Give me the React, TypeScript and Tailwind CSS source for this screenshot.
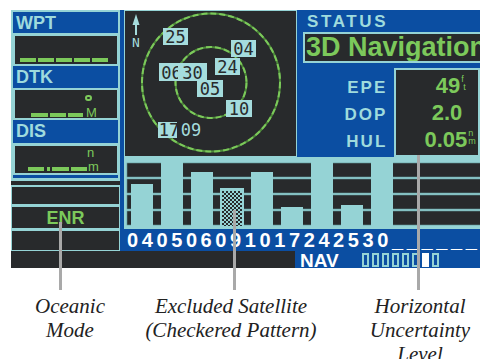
import React from "react";

const TEAL = "#95d3d5";
const DARK = "#282a2c";
const GREEN = "#7cc95b";
const CYAN = "#a5dcdd";

const sans = "font-['Liberation_Sans',Arial,sans-serif] font-bold";

function Header({ label, h }: { label: string; h: string }) {
  return (
    <div className={`${h} mx-[2px] bg-[#0b4ea2] pl-[3px] pt-[2px] text-[18px] leading-none text-[#9fdbdd] ${sans}`}>
      {label}
    </div>
  );
}

function Dash({ w }: { w: string }) {
  return <div className={`${w} h-[4px] bg-[#7cc95b]`} />;
}

function SkyMap() {
  const sats = [
    { x: 39, y: 18, w: 25, h: 17, t: "25" },
    { x: 107, y: 30, w: 25, h: 17, t: "04" },
    { x: 91, y: 48, w: 25, h: 17, t: "24" },
    { x: 35, y: 53, w: 25, h: 18, t: "06" },
    { x: 54, y: 53, w: 29, h: 18, t: "30" },
    { x: 73, y: 70, w: 26, h: 17, t: "05" },
    { x: 102, y: 90, w: 26, h: 17, t: "10" },
    { x: 34, y: 112, w: 22, h: 16, t: "17" },
  ];
  return (
    <svg width="173" height="147" viewBox="0 0 173 147" className="block">
      <rect x="0.5" y="0.5" width="172" height="146" fill={DARK} stroke={TEAL} />
      <circle cx="87" cy="72.5" r="69" fill="none" stroke="#4e8a3a" strokeWidth="2" />
      <circle cx="87" cy="72.5" r="69" fill="none" stroke={GREEN} strokeWidth="2" strokeDasharray="6 3" />
      <circle cx="87" cy="72.5" r="35.5" fill="none" stroke="#4e8a3a" strokeWidth="2" />
      <circle cx="87" cy="72.5" r="35.5" fill="none" stroke={GREEN} strokeWidth="2" strokeDasharray="6 3" />
      {/* north arrow */}
      <path d="M12 4 L8.5 15 H15.5 Z" fill={CYAN} />
      <rect x="11" y="14" width="2" height="11" fill={CYAN} />
      <text x="12" y="37" fontSize="13" textAnchor="middle" fill={CYAN} fontFamily="DejaVu Sans Mono, monospace">
        N
      </text>
      {sats.map((s) => (
        <g key={s.t}>
          <rect x={s.x} y={s.y} width={s.w} height={s.h} fill={CYAN} />
          <text
            x={s.x + s.w / 2}
            y={s.y + s.h - 2.5}
            fontSize="17"
            textAnchor="middle"
            fill={DARK}
            fontFamily="DejaVu Sans Mono, monospace"
          >
            {s.t}
          </text>
        </g>
      ))}
      <rect x="53" y="112" width="28" height="16" fill={DARK} />
      <text x="67" y="126" fontSize="17" textAnchor="middle" fill={CYAN} fontFamily="DejaVu Sans Mono, monospace">
        09
      </text>
    </svg>
  );
}

const bars = [
  { top: 27 },
  { top: 0 },
  { top: 15 },
  { top: 31, excluded: true },
  { top: 15 },
  { top: 50 },
  { top: 0 },
  { top: 48 },
  { top: 0 },
];

function SignalChart() {
  return (
    <svg width="356" height="72" viewBox="0 0 356 72" className="block">
      <defs>
        <pattern id="chk" width="4" height="4" patternUnits="userSpaceOnUse">
          <rect width="4" height="4" fill={TEAL} />
          <rect width="2" height="2" fill={DARK} />
          <rect x="2" y="2" width="2" height="2" fill={DARK} />
        </pattern>
      </defs>
      <rect width="356" height="72" fill={TEAL} />
      {[6, 22, 38, 54].map((y) => (
        <rect key={y} x="3" y={y} width="360" height="14" fill={DARK} stroke="#5f9597" strokeWidth="0.6" />
      ))}
      {bars.map((b, i) => {
        const x = 7 + i * 30;
        if (b.excluded) {
          return (
            <g key={i}>
              <rect x={x - 1} y={b.top} width="24" height={72 - b.top} fill={TEAL} />
              <rect x={x + 1} y={b.top + 3} width="20" height="35" fill="url(#chk)" />
            </g>
          );
        }
        return <rect key={i} x={x} y={b.top} width="22" height={72 - b.top} fill={TEAL} />;
      })}
    </svg>
  );
}

export default function App() {
  return (
    <div className="relative w-[480px] h-[359px] overflow-hidden bg-white pt-[10px] pl-[11px]">
      {/* unit screen */}
      <div className="w-[469px] h-[258px] flex flex-col overflow-hidden bg-[#0b4ea2]">
        <div className="h-[241px] flex">
          {/* left column */}
          <div className="w-[109px] flex flex-col bg-[#95d3d5] pt-[2px]">
            <Header label="WPT" h="h-[21px]" />
            <div className="mt-[3px] ml-[4px] mr-[3px] h-[28px] bg-[#282a2c] flex items-end pl-[5px] pb-[2px]">
              <div className="flex gap-[2px]">
                <Dash w="w-[16px]" />
                <Dash w="w-[16px]" />
                <Dash w="w-[16px]" />
                <Dash w="w-[16px]" />
                <Dash w="w-[16px]" />
              </div>
            </div>
            <div className="mt-[2px]">
              <Header label="DTK" h="h-[22px]" />
            </div>
            <div className="mt-[2px] ml-[4px] mr-[3px] h-[28px] bg-[#282a2c] flex flex-col">
              <div className="mt-[5px] ml-[70px] w-[7px] h-[6px] rounded-full border-2 border-[#7cc95b]" />
              <div className="mt-[7px] flex items-end ml-[16px]">
                <div className="flex gap-[2px] mb-[1px]">
                  <Dash w="w-[17px]" />
                  <Dash w="w-[16px]" />
                  <Dash w="w-[15px]" />
                </div>
                <span className={`ml-[3px] text-[13px] leading-[10px] text-[#7cc95b] ${sans} font-normal`}>M</span>
              </div>
            </div>
            <div className="mt-[2px]">
              <Header label="DIS" h="h-[23px]" />
            </div>
            <div className="mt-[3px] ml-[4px] mr-[3px] h-[27px] bg-[#282a2c] flex flex-col">
              <span className={`mt-[2px] ml-[72px] text-[13px] leading-[10px] text-[#7cc95b] ${sans} font-normal`}>n</span>
              <div className="mt-[4px] flex items-end ml-[13px]">
                <div className="flex items-end mb-[1px]">
                  <Dash w="w-[16px]" />
                  <div className="ml-[3px] w-[3px] h-[4px] bg-[#7cc95b]" />
                  <div className="ml-[2px]">
                    <Dash w="w-[17px]" />
                  </div>
                  <div className="ml-[2px]">
                    <Dash w="w-[16px]" />
                  </div>
                </div>
                <span className={`ml-[1px] text-[13px] leading-[10px] text-[#7cc95b] ${sans} font-normal`}>m</span>
              </div>
            </div>
            <div className="mt-[2px] mx-[2px] h-[3px] bg-[#0b4ea2]" />
            <div className="mt-[3px] h-[4px] bg-[#282a2c]" />
            <div className="mt-[2px] mx-[1px] h-[17px] bg-[#282a2c]" />
            <div className={`mt-[3px] mx-[1px] h-[21px] bg-[#282a2c] flex justify-center pt-[2px] text-[18px] leading-none text-[#7cc95b] ${sans}`}>
              ENR
            </div>
            <div className="mt-[3px] mx-[1px] h-[19px] bg-[#282a2c]" />
          </div>

          <div className="w-[4px]" />

          {/* right area */}
          <div className="w-[356px] flex flex-col">
            <div className="h-[147px] flex">
              <SkyMap />
              <div className="w-[183px] overflow-hidden">
                <div className={`mt-[3px] pl-[10px] text-[17px] leading-none tracking-[2.6px] text-[#9fdbdd] ${sans}`}>
                  STATUS
                </div>
                <div className="mt-[2px] ml-[6px] w-[200px] h-[31px] border-2 border-[#95d3d5] bg-[#282a2c] overflow-hidden">
                  <div className={`pl-[1px] text-[27px] leading-none whitespace-nowrap text-[#7cc95b] ${sans}`}>
                    3D Navigation
                  </div>
                </div>
                <div className="mt-[5px] flex">
                  <div className={`w-[95px] pt-[11px] text-right text-[17px] leading-none tracking-[2px] text-[#9fdbdd] ${sans}`}>
                    <div className="h-[27px]">EPE</div>
                    <div className="h-[27px]">DOP</div>
                    <div className="h-[27px]">HUL</div>
                  </div>
                  <div className="ml-[7px] w-[90px] h-[89px] border-2 border-[#95d3d5] bg-[#282a2c] pt-[5px]">
                    <div className={`w-[79px] h-[27px] flex justify-end pr-[6px] text-[22px] leading-none text-[#7cc95b] ${sans}`}>
                      <span>49</span>
                      <span className="ml-[1px] w-[8px] flex flex-col text-[9px] leading-[8px] font-normal">
                        <span>f</span>
                        <span className="pl-[2px]">t</span>
                      </span>
                    </div>
                    <div className={`w-[79px] h-[27px] flex justify-end pr-[13px] text-[22px] leading-none text-[#7cc95b] ${sans}`}>
                      2.0
                    </div>
                    <div className={`w-[79px] h-[27px] flex justify-end text-[22px] leading-none text-[#7cc95b] ${sans}`}>
                      <span>0.05</span>
                      <span className="ml-[1px] w-[7px] flex flex-col text-[9px] leading-[8px] font-normal">
                        <span>n</span>
                        <span>m</span>
                      </span>
                    </div>
                  </div>
                </div>
              </div>
            </div>
            <SignalChart />
            <div className={`h-[21px] pl-[3px] pt-[1px] text-[20px] leading-none tracking-[3.6px] whitespace-nowrap text-white ${sans}`}>
              040506091017242530______
            </div>
          </div>
        </div>

        {/* bottom status row */}
        <div className="h-[17px] flex">
          <div className="w-[284px] bg-[#282a2c]" />
          <div className="flex-1 flex pl-[5px]">
            <span className={`text-[19px] leading-none text-white ${sans}`}>NAV</span>
            <div className="ml-[23px] mt-[2px] flex gap-[3px]">
              {[0, 1, 2, 3, 4, 5, 6, 7].map((i) => (
                <div
                  key={i}
                  className={
                    i === 6
                      ? "w-[7px] h-[14px] bg-white"
                      : "w-[7px] h-[14px] border-2 border-[#95d3d5]"
                  }
                />
              ))}
            </div>
          </div>
        </div>
      </div>

      {/* callouts */}
      <div className="mt-[26px] -ml-[11px] flex font-['Liberation_Serif',serif] italic text-[21px] leading-[24px] text-[#222]">
        <div className="ml-[10px] w-[120px] text-center">
          <div>Oceanic</div>
          <div>Mode</div>
        </div>
        <div className="ml-[1px] w-[200px] text-center">
          <div>Excluded Satellite</div>
          <div>(Checkered Pattern)</div>
        </div>
        <div className="ml-[29px] w-[120px] text-center">
          <div>Horizontal</div>
          <div>Uncertainty</div>
          <div>Level</div>
        </div>
      </div>

      <div className="absolute left-[59px] top-[222px] w-[3px] h-[68px] bg-[#a9a9a9]" />
      <div className="absolute left-[233px] top-[210px] w-[3px] h-[80px] bg-[#a9a9a9]" />
      <div className="absolute left-[417px] top-[155px] w-[3px] h-[135px] bg-[#a9a9a9]" />
    </div>
  );
}
